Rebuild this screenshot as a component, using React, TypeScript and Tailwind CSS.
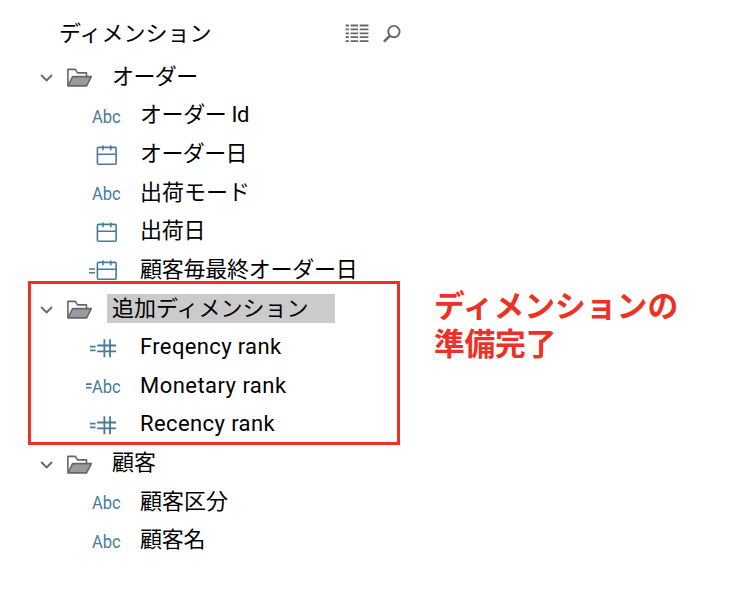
type Kind = "abc" | "date" | "calcDate" | "calcNumber" | "calcAbc";
type Row = { label: string; kind?: Kind; selected?: boolean; tracking?: string };

const rows: Row[] = [
  { label: "オーダー", tracking: "tracking-[-0.6px]" },
  { label: "オーダー Id", kind: "abc", tracking: "tracking-[-0.4px]" },
  { label: "オーダー日", kind: "date", tracking: "tracking-[-0.6px]" },
  { label: "出荷モード", kind: "abc" },
  { label: "出荷日", kind: "date", tracking: "tracking-[-0.2px]" },
  { label: "顧客毎最終オーダー日", kind: "calcDate", tracking: "tracking-[-0.25px]" },
  { label: "追加ディメンション", selected: true },
  { label: "Freqency rank", kind: "calcNumber", tracking: "tracking-[0.36px]" },
  { label: "Monetary rank", kind: "calcAbc", tracking: "tracking-[0.46px]" },
  { label: "Recency rank", kind: "calcNumber", tracking: "tracking-[0.4px]" },
  { label: "顧客" },
  { label: "顧客区分", kind: "abc" },
  { label: "顧客名", kind: "abc", tracking: "tracking-[-0.2px]" },
];

function FieldIcon({ kind }: { kind: Kind }) {
  const isDate = kind === "date" || kind === "calcDate";
  const isAbc = kind === "abc" || kind === "calcAbc";
  return (
    <svg width="40" height="38" viewBox="0 0 40 38" fill="none" stroke="#457c9a" strokeWidth="1.6" className="shrink-0">
      {kind === "calcDate" && <path d="M5 19h6M5 22.8h6" />}
      {kind === "calcNumber" && <path d="M6 18.6h5.6M6 22.4h5.6" />}
      {kind === "calcAbc" && <path d="M2 18.1h5.6M2 21.8h5.6" />}
      {isDate && (
        <>
          <rect x="13.4" y="12.4" width="18.7" height="16.8" rx="1" />
          <path d="M13.4 19.2h18.7M19 10.6v4.6M26.8 10.6v4.6" />
        </>
      )}
      {kind === "calcNumber" && <path d="M20.4 11.2v18M26 11.2v18M13.2 17.5h18.8M13.2 23.4h18.8" strokeWidth="1.8" />}
      {isAbc && (
        <text
          x="8"
          y="27"
          fill="#457c9a"
          stroke="none"
          fontSize="17.5"
          textLength="28.8"
          lengthAdjust="spacingAndGlyphs"
          className="font-['Roboto',sans-serif]"
        >
          Abc
        </text>
      )}
    </svg>
  );
}

function Chevron() {
  return (
    <svg width="14" height="38" viewBox="0 0 14 38" fill="none" stroke="#666" strokeWidth="1.9" className="shrink-0">
      <path d="M1.2 18 6.6 23.4 12 18" />
    </svg>
  );
}

function Folder() {
  return (
    <svg width="27" height="38" viewBox="0 0 27 38" fill="none" stroke="#666" strokeWidth="1.6" strokeLinejoin="round" className="shrink-0">
      <path d="M1.9 28.8V12.4h7.4l2.2 3.5h9v3.6" />
      <path d="M6.6 19.6H25.3L20.6 28.9H2z" fill="#949ca3" />
    </svg>
  );
}

function TreeRow({ row }: { row: Row }) {
  if (row.kind) {
    return (
      <li className="flex h-[38.64px] items-center pl-[84px]">
        <FieldIcon kind={row.kind} />
        <span className={"ml-4 whitespace-nowrap " + (row.tracking ?? "")}>{row.label}</span>
      </li>
    );
  }
  return (
    <li className="flex h-[38.64px] items-center pl-10">
      <Chevron />
      <span className="ml-3 flex">
        <Folder />
      </span>
      <span
        className={
          "ml-[14px] flex h-[29px] w-[228px] items-center pl-[5px] " +
          (row.selected ? "bg-[#cbcbcb] " : "") +
          (row.tracking ?? "")
        }
      >
        {row.label}
      </span>
    </li>
  );
}

export default function App() {
  return (
    <div className="relative flex h-[597px] w-[730px] overflow-hidden bg-white font-['Roboto','Noto_Sans_CJK_JP',sans-serif] text-[22px] leading-[29px] text-black">
      <section className="w-[434px] shrink-0">
        <header className="flex h-[57px] items-center pt-[10px] pl-[59px]">
          <h1 className="w-[286px]">ディメンション</h1>
          <svg width="24" height="19" viewBox="0 0 24 19" stroke="#666" strokeWidth="1.8" fill="none">
            <path
              d="M.6 1.5H23.4M.6 5.4H23.4M.6 9.3H23.4M.6 13.2H23.4M.6 17.1H23.4"
              strokeDasharray="3.3 1.7 7.4 1.7 8.7 1"
            />
          </svg>
          <svg width="18" height="19" viewBox="0 0 18 19" stroke="#666" fill="none" className="ml-[14px]">
            <circle cx="10.9" cy="7.6" r="5.7" strokeWidth="1.9" />
            <path d="M6.8 11.8 1 17.6" strokeWidth="2.6" />
          </svg>
        </header>
        <ul>
          {rows.map((row) => (
            <TreeRow key={row.label} row={row} />
          ))}
        </ul>
      </section>
      <p className="pt-[288px] text-[30.8px] leading-[38px] font-bold text-[#ee3124]">
        ディメンションの
        <br />
        <span className="tracking-[-0.3px]">準備完了</span>
      </p>
      <div className="pointer-events-none absolute top-[281px] left-7 h-[164px] w-[372px] border-3 border-[#ee3124]" />
    </div>
  );
}
